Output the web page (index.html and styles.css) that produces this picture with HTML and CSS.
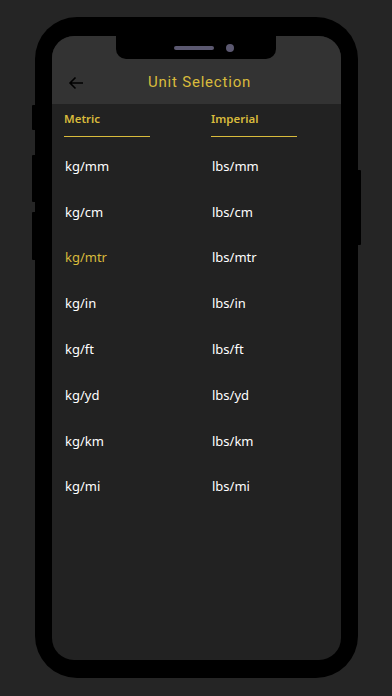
FILE: index.html
```html
<!DOCTYPE html>
<html>
<head>
<meta charset="utf-8">
<link rel="stylesheet" href="styles.css">
</head>
<body>
<div class="stage">
  <div class="phone">
    <span class="btn btn-l1"></span>
    <span class="btn btn-l2"></span>
    <span class="btn btn-l3"></span>
    <span class="btn btn-r1"></span>
    <div class="screen">
      <div class="notch"><span class="speaker"></span><span class="camera"></span></div>
      <header class="appbar">
        <svg class="back" width="16" height="14" viewBox="0 0 16 14"><path d="M15 7H2M7.5 1.5L2 7l5.5 5.5" fill="none" stroke="#000" stroke-width="1.6"/></svg>
        <h1 class="title">Unit Selection</h1>
      </header>
      <div class="tabs">
        <div class="tab">Metric</div>
        <div class="tab">Imperial</div>
      </div>
      <div class="units">
        <div class="unit">kg/mm</div><div class="unit">lbs/mm</div>
        <div class="unit">kg/cm</div><div class="unit">lbs/cm</div>
        <div class="unit active">kg/mtr</div><div class="unit">lbs/mtr</div>
        <div class="unit">kg/in</div><div class="unit">lbs/in</div>
        <div class="unit">kg/ft</div><div class="unit">lbs/ft</div>
        <div class="unit">kg/yd</div><div class="unit">lbs/yd</div>
        <div class="unit">kg/km</div><div class="unit">lbs/km</div>
        <div class="unit">kg/mi</div><div class="unit">lbs/mi</div>
      </div>
    </div>
  </div>
</div>
</body>
</html>
```
FILE: styles.css
```css
html, body {
  margin: 0;
  padding: 0;
}
body {
  width: 392px;
  height: 696px;
  overflow: hidden;
  background: #252525;
  font-family: "Noto Sans", "Open Sans", sans-serif;
}
.stage {
  display: flex;
  justify-content: center;
  padding-top: 17px;
}
.phone {
  position: relative;
  width: 323px;
  height: 661px;
  box-sizing: border-box;
  background: #000;
  border-radius: 42px;
  padding: 19px 17px 18px 17px;
  margin-left: 1px;
}
.btn {
  position: absolute;
  width: 4px;
  background: #000;
  border-radius: 1px;
}
.btn-l1 { left: -3px; top: 88px; height: 25px; }
.btn-l2 { left: -3px; top: 138px; height: 47px; }
.btn-l3 { left: -3px; top: 195px; height: 48px; }
.btn-r1 { right: -3px; top: 153px; height: 75px; }
.screen {
  position: relative;
  height: 100%;
  background: #222222;
  border-radius: 22px;
  overflow: hidden;
}
.notch {
  position: absolute;
  z-index: 2;
  left: 64px;
  top: 0;
  width: 160px;
  height: 23px;
  background: #000;
  border-radius: 0 0 10px 10px;
  display: flex;
  align-items: center;
  justify-content: center;
  gap: 12px;
  padding-left: 16px;
  box-sizing: border-box;
}
.speaker {
  width: 40px;
  height: 4px;
  border-radius: 2px;
  background: #5b5870;
}
.camera {
  width: 8px;
  height: 8px;
  border-radius: 50%;
  background: #5b5870;
}
.appbar {
  height: 68px;
  box-sizing: border-box;
  background: #333333;
  padding-top: 34px;
  position: relative;
  display: flex;
  justify-content: center;
}
.back {
  position: absolute;
  left: 16px;
  top: 40px;
}
.title {
  margin: 0;
  font-family: Roboto, "Noto Sans", sans-serif;
  font-weight: 400;
  font-size: 15px;
  line-height: 24px;
  letter-spacing: 0.8px;
  color: #d9bb3c;
  padding-left: 6px;
}
.tabs {
  display: grid;
  grid-template-columns: 147px 86px;
  padding: 8px 0 0 12px;
}
.tab {
  width: 86px;
  font-size: 11.5px;
  font-weight: 600;
  line-height: 14px;
  color: #d9bb3c;
  padding-bottom: 10px;
  border-bottom: 1.5px solid #d9bb3c;
}
.units {
  display: grid;
  grid-template-columns: 147px 1fr;
  grid-auto-rows: 45.8px;
  align-items: center;
  padding: 6px 0 0 13px;
}
.unit {
  font-size: 13px;
  line-height: 18px;
  color: #ffffff;
}
.unit.active {
  color: #d9bb3c;
}
```
